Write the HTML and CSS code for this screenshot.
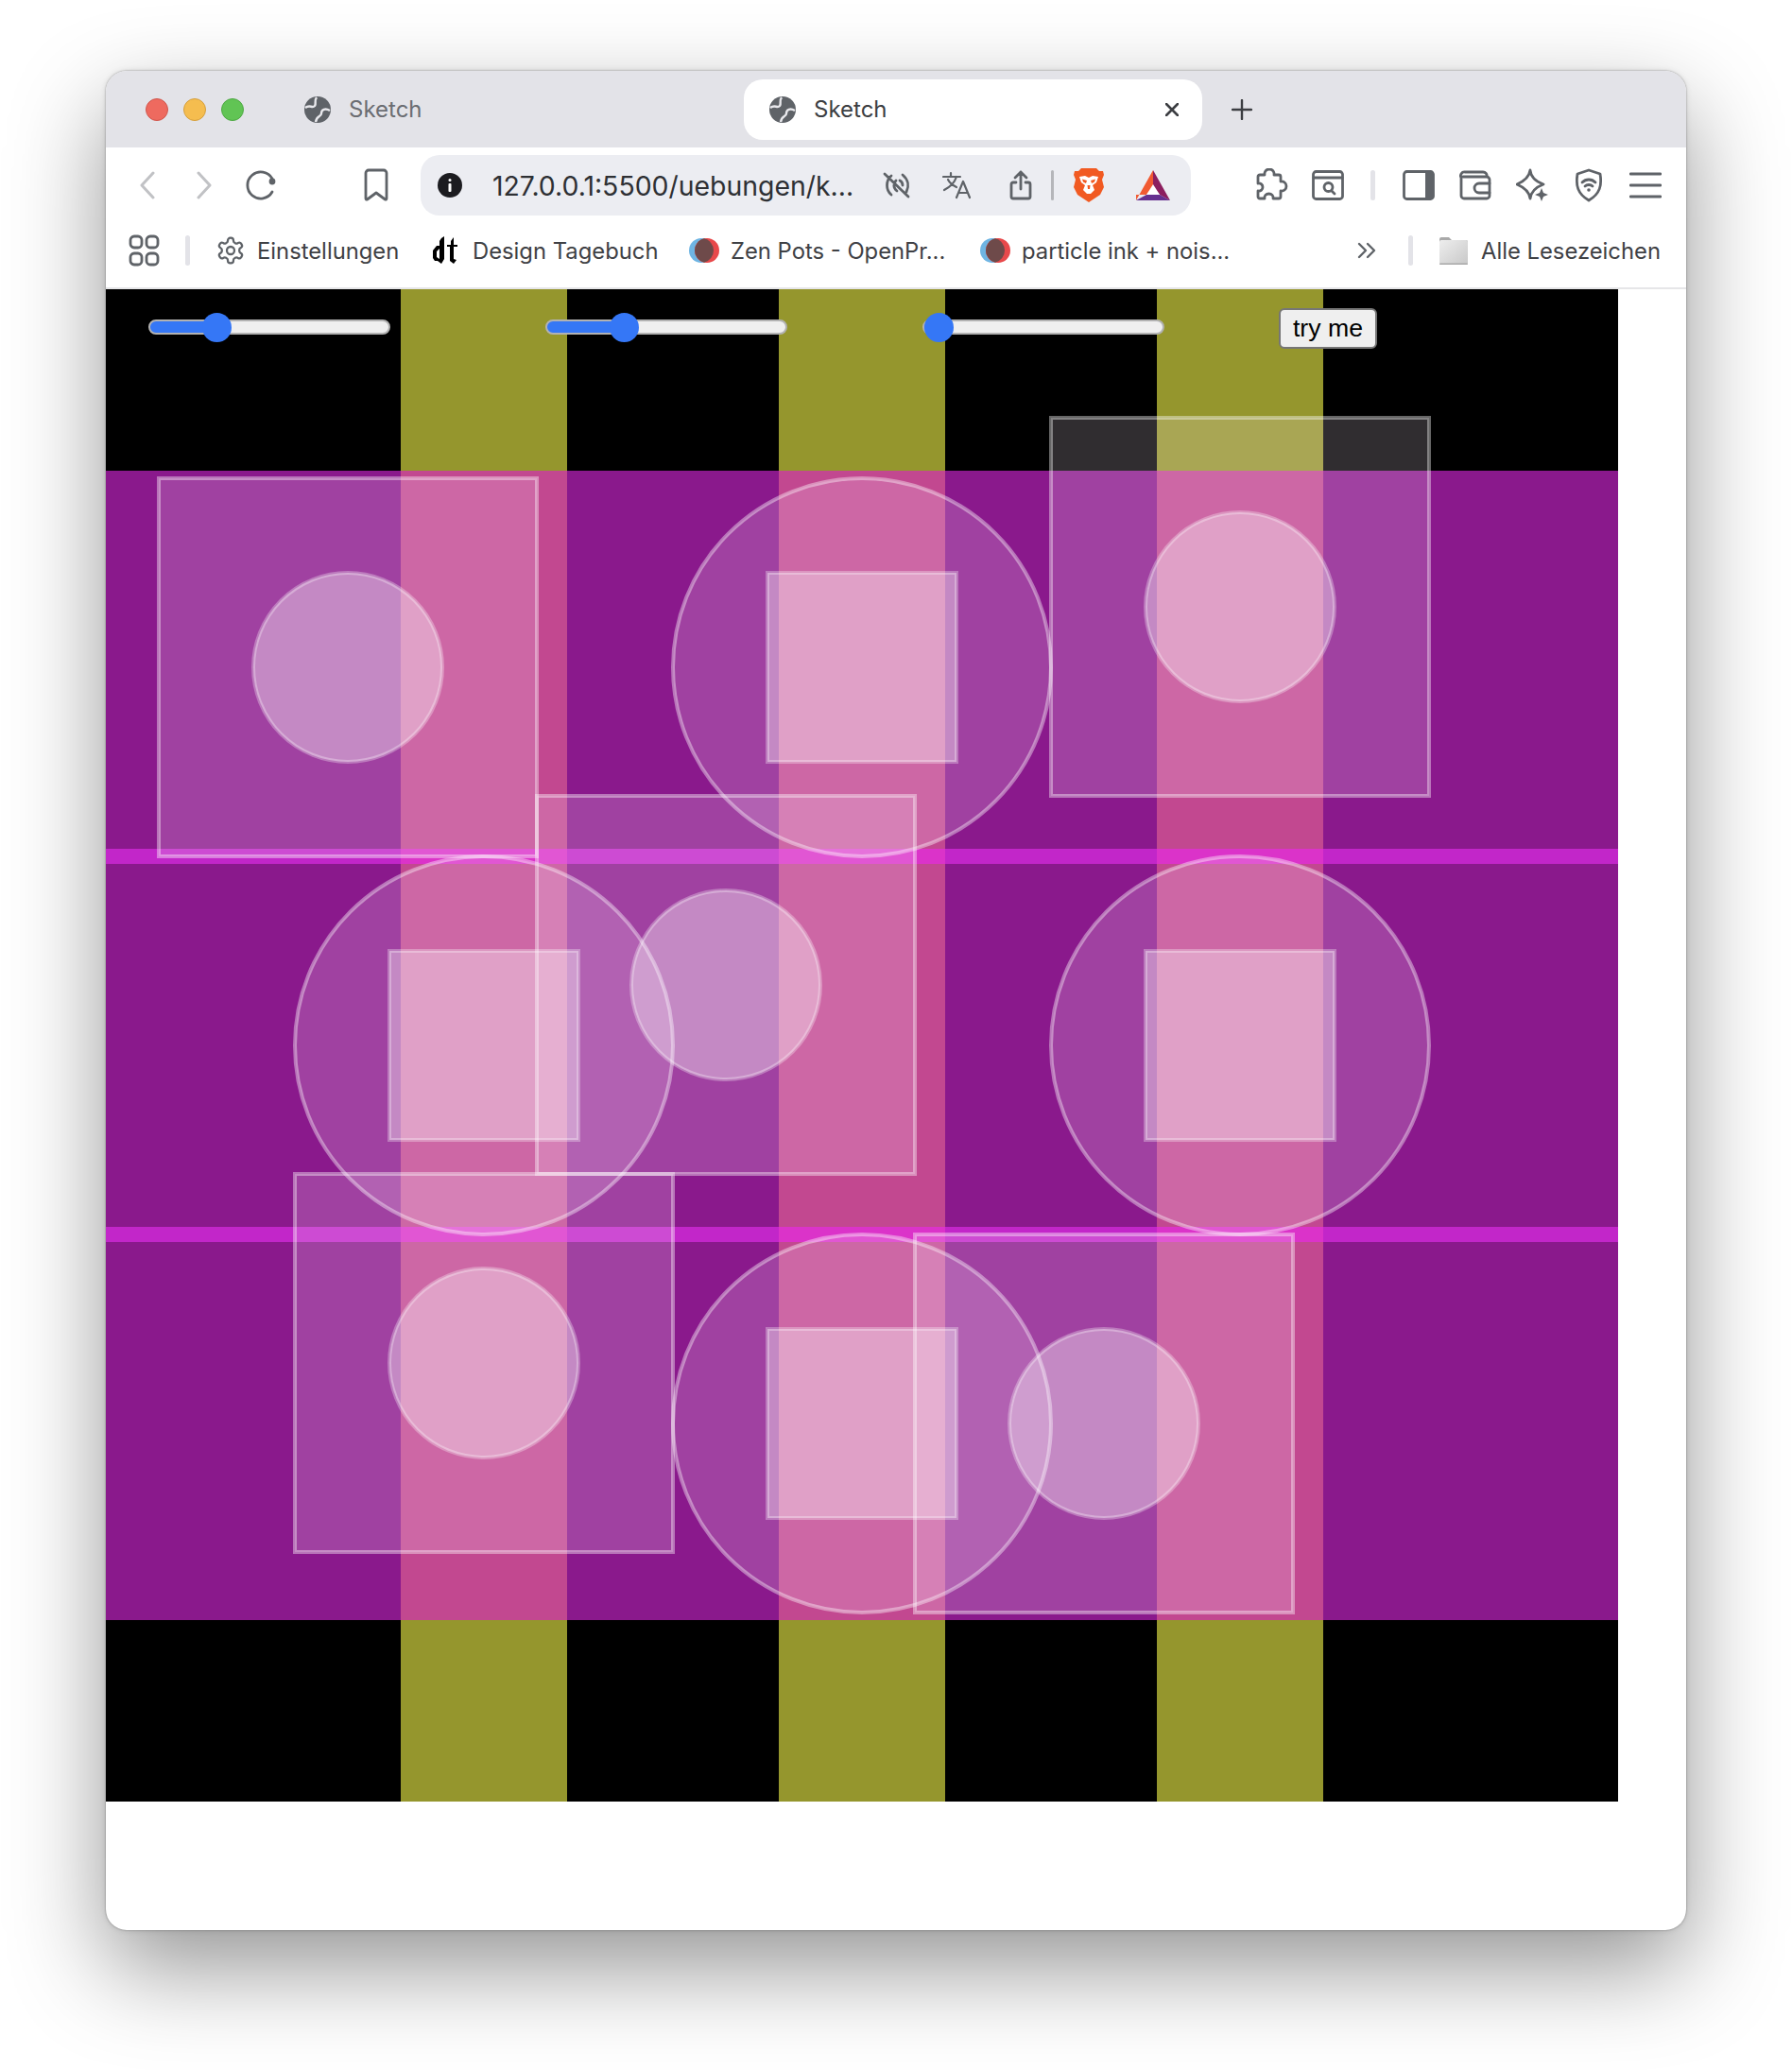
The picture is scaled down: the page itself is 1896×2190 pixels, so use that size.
FILE: index.html
```html
<!DOCTYPE html>
<html lang="de">
<head>
<meta charset="utf-8">
<title>Sketch</title>
<link rel="stylesheet" href="styles.css">
</head>
<body>
<svg class="sprites" width="0" height="0" aria-hidden="true">
  <symbol id="globe" viewBox="0 0 28 28">
    <circle cx="14" cy="14" r="14" fill="#5f6368"/>
    <path d="M1 12C6 8 8 13 11 10C13 7 10 5 13 1M27 15C22 12 18 14 18 18C18 22 13 20 12 27" fill="none" stroke="#e9e9ed" stroke-width="2.4"/>
  </symbol>
  <symbol id="fav" viewBox="0 0 32 28">
    <circle cx="13" cy="14" r="13" fill="#6fb5e3"/>
    <circle cx="19" cy="14" r="13" fill="#e8494b"/>
    <path d="M16 1.350A13 13 0 0 1 16 26.650A13 13 0 0 1 16 1.350Z" fill="#6e4a4a"/>
    <rect x="9" y="9" width="14" height="10" fill="#6e4a4a"/>
  </symbol>
</svg>

<main class="window">
  <header class="tabstrip">
    <div class="lights">
      <span class="light light-red"></span>
      <span class="light light-yellow"></span>
      <span class="light light-green"></span>
    </div>
    <div class="tab tab-idle">
      <svg class="tab-globe"><use href="#globe"/></svg>
      <span class="tab-title">Sketch</span>
    </div>
    <div class="tab tab-active">
      <svg class="tab-globe"><use href="#globe"/></svg>
      <span class="tab-title">Sketch</span>
      <svg class="tab-close" viewBox="0 0 14 14"><path d="M1 1L13 13M13 1L1 13"/></svg>
    </div>
    <svg class="tab-new" viewBox="0 0 22 22"><path d="M11 1V21M1 11H21"/></svg>
  </header>

  <nav class="navrow">
    <div class="slot slot-60"><svg class="ico ico-faint" width="16" height="30" viewBox="0 0 16 30"><path d="M14 2L2 15L14 28"/></svg></div>
    <div class="slot slot-60"><svg class="ico ico-faint" width="16" height="30" viewBox="0 0 16 30"><path d="M2 2L14 15L2 28"/></svg></div>
    <div class="slot slot-58"><svg class="ico" width="34" height="34" viewBox="0 0 34 34"><path d="M29 10A14 14 0 1 0 29 24"/><circle class="solid" cx="29" cy="13" r="3.400"/></svg></div>
    <div class="spacer-48"></div>
    <div class="slot slot-92"><svg class="ico" width="26" height="36" viewBox="0 0 26 36"><path d="M5 2H21A3 3 0 0 1 24 5V32A1 1 0 0 1 22.500 33L13 26L3.500 33A1 1 0 0 1 2 32V5A3 3 0 0 1 5 2Z"/></svg></div>
    <div class="omnibox">
      <svg class="info" viewBox="0 0 26 26"><circle cx="13" cy="13" r="13"/><rect x="11.500" y="11" width="3" height="9" rx="1"/><rect x="11.500" y="6" width="3" height="3" rx="1.500"/></svg>
      <span class="url">127.0.0.1:5500/uebungen/k...</span>
      <div class="slot slot-62"><svg class="ico" width="30" height="28" viewBox="0 0 30 28"><path d="M2 2L27 26M9 4C3 9 3 19 9 24M14 9C11 12 11 17 15 20M21 3C27 8 28 15 25 21M18 9C20 10 21 12 21 14"/></svg></div>
      <div class="slot slot-66"><svg class="ico ico-thin" width="32" height="30" viewBox="0 0 32 30"><path d="M1 6H19M9 2V6M15 6C13 12 8 17 2 20M6 9C8 13 11 15 15 17M15 28L22 11L29 28M18 23H27"/></svg></div>
      <div class="slot slot-68"><svg class="ico" width="24" height="32" viewBox="0 0 24 32"><path d="M12 2V20M6 8L12 2L18 8M7 13H4A2 2 0 0 0 2 15V28A2 2 0 0 0 4 30H20A2 2 0 0 0 22 28V15A2 2 0 0 0 20 13H17"/></svg></div>
      <span class="vsep vsep-dark"></span>
      <div class="slot slot-74">
        <svg width="32" height="36" viewBox="0 0 32 36"><path fill="#f15a22" d="M8 0H24L27 3L31 3L32 7L30 12L32 20L28 28L16 36L4 28L0 20L2 12L0 7L1 3L5 3Z"/><path fill="#fff" d="M6 9L12 8L16 10L20 8L26 9L24 15L20 18L22 23L18 27H14L10 23L12 18L8 15Z"/><path fill="#f15a22" d="M9 11.500L14 13L13 16L10 14.500ZM23 11.500L18 13L19 16L22 14.500ZM14.500 18H17.500L17 22H15Z"/></svg>
      </div>
      <div class="slot slot-62">
        <svg width="36" height="32" viewBox="0 0 36 32"><path fill="#f15a32" d="M18 0V17L11 26H0L0 32Z"/><path fill="#8c1f5f" d="M18 0L36 32L25 26L18 17Z"/><path fill="#66308f" d="M0 32L11 26H25L36 32Z"/><path fill="#fff" d="M18 15L25 26H11Z"/></svg>
      </div>
    </div>
    <div class="spacer-55"></div>
    <div class="slot slot-60"><svg class="ico" width="36" height="36" viewBox="0 0 36 36"><path d="M4 9a2 2 0 0 1 2-2h5c-.5-3 1.500-6 5-6s5.500 3 5 6h5a2 2 0 0 1 2 2v5c3-.5 6 1.500 6 5s-3 5.500-6 5v6a2 2 0 0 1-2 2h-6c.5-3-1.500-5-4.500-5s-5 2-4.500 5H6a2 2 0 0 1-2-2v-6c3 .5 5-1.500 5-4s-2-4.500-5-4z"/></svg></div>
    <div class="slot slot-58"><svg class="ico" width="34" height="32" viewBox="0 0 34 32"><rect x="1.500" y="1.500" width="31" height="29" rx="3"/><path d="M2 8H32M21 22L24 25"/><circle cx="17.500" cy="18" r="4.500"/></svg></div>
    <div class="slot slot-38"><span class="vsep"></span></div>
    <div class="slot slot-60"><svg class="ico" width="34" height="32" viewBox="0 0 34 32"><rect x="1.500" y="1.500" width="31" height="29" rx="3"/><path class="solid" d="M24 1.500H30A3 3 0 0 1 33 4.500V27.500A3 3 0 0 1 30 30.500H24Z"/></svg></div>
    <div class="slot slot-60"><svg class="ico" width="34" height="32" viewBox="0 0 34 32"><path d="M2 8V27A3 3 0 0 0 5 30H29A3 3 0 0 0 32 27V10A3 3 0 0 0 29 7H4M2 8A4 4 0 0 1 6 2H25A4 4 0 0 1 29 7"/><path d="M32 14H21A4 4 0 0 0 21 24H32"/></svg></div>
    <div class="slot slot-60"><svg class="ico" width="34" height="36" viewBox="0 0 34 36"><path d="M15 2C15.500 9 21 14 29 17C21 20 16 24 15 32C14 24 8 20 1 17C8 14 14 9 15 2Z"/><path class="solid" d="M27 21L29 26L34 28L29 30L27 35L25 30L20 28L25 26Z"/></svg></div>
    <div class="slot slot-60"><svg class="ico" width="30" height="36" viewBox="0 0 30 36"><path d="M15 2L27 6C29 18 27 27 15 34C3 27 1 18 3 6Z"/><path d="M8 15C12 11 18 11 22 15M11 19C13 17 17 17 19 19"/><circle class="solid" cx="15" cy="23" r="1.800"/></svg></div>
    <div class="slot slot-60"><svg class="ico" width="34" height="30" viewBox="0 0 34 30"><path d="M1 3H33M1 15H33M1 27H33"/></svg></div>
  </nav>

  <div class="bookmarks">
    <svg class="ico ico-grid" width="33" height="34" viewBox="0 0 33 34"><rect x="2" y="2" width="12" height="12" rx="4"/><rect x="19" y="2" width="12" height="12" rx="4"/><rect x="2" y="20" width="12" height="12" rx="4"/><rect x="19" y="20" width="12" height="12" rx="4"/></svg>
    <span class="vsep"></span>
    <div class="bm">
      <svg class="ico ico-thin" width="32" height="32" viewBox="0 0 24 24"><path stroke-width="1.700" d="M12.220 2h-.44a2 2 0 0 0-2 2v.18a2 2 0 0 1-1 1.730l-.43.25a2 2 0 0 1-2 0l-.15-.08a2 2 0 0 0-2.730.73l-.22.38a2 2 0 0 0 .73 2.730l.15.1a2 2 0 0 1 1 1.720v.51a2 2 0 0 1-1 1.740l-.15.09a2 2 0 0 0-.73 2.730l.22.38a2 2 0 0 0 2.730.73l.15-.08a2 2 0 0 1 2 0l.43.25a2 2 0 0 1 1 1.730V20a2 2 0 0 0 2 2h.44a2 2 0 0 0 2-2v-.18a2 2 0 0 1 1-1.730l.43-.25a2 2 0 0 1 2 0l.15.08a2 2 0 0 0 2.730-.73l.22-.39a2 2 0 0 0-.73-2.730l-.15-.08a2 2 0 0 1-1-1.740v-.5a2 2 0 0 1 1-1.740l.15-.09a2 2 0 0 0 .73-2.730l-.22-.38a2 2 0 0 0-2.730-.73l-.15.08a2 2 0 0 1-2 0l-.43-.25a2 2 0 0 1-1-1.730V4a2 2 0 0 0-2-2z"/><circle stroke-width="1.700" cx="12" cy="12" r="3"/></svg>
      <span class="bm-label">Einstellungen</span>
    </div>
    <div class="bm bm-wide">
      <svg width="30" height="30" viewBox="0 0 30 30"><path fill="#000" d="M11 2L14 0V24L11 29L7 26H4L2 23V15L6 10H9V5ZM9 13L6 16V22L9 24ZM21 5L24 1V9H28V11H24V24L27 25L24 29L20 26V11H17V9H21Z"/></svg>
      <span class="bm-label">Design Tagebuch</span>
    </div>
    <div class="bm">
      <svg width="32" height="28"><use href="#fav"/></svg>
      <span class="bm-label">Zen Pots - OpenPr...</span>
    </div>
    <div class="bm">
      <svg width="32" height="28"><use href="#fav"/></svg>
      <span class="bm-label">particle ink + nois...</span>
    </div>
    <svg class="ico ico-more" width="20" height="18" viewBox="0 0 20 18"><path d="M2 2L9 9L2 16M11 2L18 9L11 16"/></svg>
    <span class="vsep"></span>
    <div class="bm bm-wide">
      <svg width="30" height="30" viewBox="0 0 30 30"><defs><linearGradient id="folder" x1="0" y1="0" x2="1" y2="1"><stop offset="0" stop-color="#eeeeee"/><stop offset="1" stop-color="#c8c8c8"/></linearGradient></defs><path fill="#a9a9a9" d="M2 1H10L13 4H28A2 2 0 0 1 30 6V12H0V3A2 2 0 0 1 2 1Z"/><rect y="4" width="30" height="26" rx="2" fill="url(#folder)"/><rect y="28.500" width="30" height="1.500" rx=".7" fill="#a8a8a8"/></svg>
      <span class="bm-label">Alle Lesezeichen</span>
    </div>
  </div>

  <section class="sketch">
    <svg class="art" width="1600" height="1600" viewBox="0 0 1600 1600">
      <rect class="bg" width="1600" height="1600"/>
      <rect class="bar" x="312" width="176" height="1600"/>
      <rect class="bar" x="712" width="176" height="1600"/>
      <rect class="bar" x="1112" width="176" height="1600"/>
      <rect class="band" y="192" width="1600" height="1216"/>
      <rect class="band-bar" x="312" y="192" width="176" height="1216"/>
      <rect class="band-bar" x="712" y="192" width="176" height="1216"/>
      <rect class="band-bar" x="1112" y="192" width="176" height="1216"/>
      <rect class="stripe" y="592" width="1600" height="16"/>
      <rect class="stripe" y="992" width="1600" height="16"/>
      <rect class="stripe-bar" x="312" y="592" width="176" height="16"/>
      <rect class="stripe-bar" x="712" y="592" width="176" height="16"/>
      <rect class="stripe-bar" x="1112" y="592" width="176" height="16"/>
      <rect class="stripe-bar" x="312" y="992" width="176" height="16"/>
      <rect class="stripe-bar" x="712" y="992" width="176" height="16"/>
      <rect class="stripe-bar" x="1112" y="992" width="176" height="16"/>

      <rect class="outer" x="56" y="200" width="400" height="400"/><circle class="inner" cx="256" cy="400" r="100"/>
      <circle class="outer" cx="800" cy="400" r="200"/><rect class="inner" x="700" y="300" width="200" height="200"/>
      <rect class="outer" x="1000" y="136" width="400" height="400"/><circle class="inner" cx="1200" cy="336" r="100"/>
      <circle class="outer" cx="400" cy="800" r="200"/><rect class="inner" x="300" y="700" width="200" height="200"/>
      <rect class="outer" x="456" y="536" width="400" height="400"/><circle class="inner" cx="656" cy="736" r="100"/>
      <circle class="outer" cx="1200" cy="800" r="200"/><rect class="inner" x="1100" y="700" width="200" height="200"/>
      <rect class="outer" x="200" y="936" width="400" height="400"/><circle class="inner" cx="400" cy="1136" r="100"/>
      <circle class="outer" cx="800" cy="1200" r="200"/><rect class="inner" x="700" y="1100" width="200" height="200"/>
      <rect class="outer" x="856" y="1000" width="400" height="400"/><circle class="inner" cx="1056" cy="1200" r="100"/>
    </svg>
    <div class="controls">
      <input class="range" type="range" min="0" max="100" value="25" style="--pct:72px" aria-label="a">
      <input class="range range-b" type="range" min="0" max="100" value="30" style="--pct:83px" aria-label="b">
      <input class="range range-c" type="range" min="0" max="100" value="0" style="--pct:15px" aria-label="c">
      <button class="try" type="button">try me</button>
    </div>
  </section>
</main>
</body>
</html>
```

FILE: styles.css
```css
* { box-sizing: border-box; }

html, body {
  margin: 0;
  height: 2190px;
  overflow: hidden;
  background: #fff;
}

body {
  padding: 75px 0 0 112px;
  font-family: Inter, "Liberation Sans", sans-serif;
}

.sprites { position: absolute; }

.window {
  width: 1672px;
  height: 1967px;
  border-radius: 22px;
  background: #fff;
  overflow: hidden;
  box-shadow: 0 0 2px rgba(0, 0, 0, .4), 0 0 6px rgba(0, 0, 0, .12), 0 40px 100px rgba(0, 0, 0, .42);
}

/* tab strip */
.tabstrip {
  height: 81px;
  padding: 9px 0 8px 42px;
  display: flex;
  align-items: center;
  background: #e3e3e8;
}

.lights { display: flex; gap: 16px; width: 104px; }

.light { width: 24px; height: 24px; border-radius: 50%; border: 1px solid; }
.light-red { background: #ee6a5f; border-color: #d0564c; }
.light-yellow { background: #f5bd4f; border-color: #d59f3c; }
.light-green { background: #61c454; border-color: #4ea843; }

.tab {
  width: 485px;
  height: 64px;
  padding: 0 24px 0 27px;
  display: flex;
  align-items: center;
  border-radius: 20px;
  font-size: 24px;
}

.tab-idle { margin-left: 37px; color: #6b6d72; }
.tab-active { margin-left: 7px; background: #fff; color: #3c3e42; }

.tab-globe { width: 28px; height: 28px; flex: none; }
.tab-title { margin-left: 19px; margin-top: -1px; }

.tab-close {
  width: 14px;
  height: 14px;
  margin-left: auto;
  margin-right: 1px;
  fill: none;
  stroke: #3c3e42;
  stroke-width: 2.600;
  stroke-linecap: round;
}

.tab-new {
  width: 22px;
  height: 22px;
  margin-left: 31px;
  fill: none;
  stroke: #3c3e42;
  stroke-width: 2.400;
  stroke-linecap: round;
}

/* nav row */
.navrow {
  height: 80px;
  padding-left: 14px;
  display: flex;
  align-items: center;
  background: #fff;
}

.slot { display: flex; align-items: center; justify-content: center; flex: none; }
.slot-38 { width: 38px; }
.slot-58 { width: 58px; padding-left: 2px; }
.slot-60 { width: 60px; }
.slot-62 { width: 62px; }
.slot-66 { width: 66px; }
.slot-68 { width: 68px; }
.slot-74 { width: 74px; }
.slot-92 { width: 92px; }
.spacer-48 { width: 48px; flex: none; }
.spacer-55 { width: 55px; flex: none; }

.ico {
  flex: none;
  fill: none;
  stroke: #5f6368;
  stroke-width: 2.800;
  stroke-linecap: round;
  stroke-linejoin: round;
}
.ico-faint { stroke: #c1c2c5; stroke-width: 3; }
.ico-thin { stroke-width: 2.200; }
.ico .solid { fill: #5f6368; stroke: none; }

.omnibox {
  width: 815px;
  height: 64px;
  margin-left: 1px;
  padding-left: 18px;
  display: flex;
  align-items: center;
  flex: none;
  border-radius: 20px;
  background: #ecedf2;
}

.info { width: 26px; height: 26px; flex: none; fill: #1c1c20; }
.info rect { fill: #fff; }

.url {
  width: 397px;
  margin-left: 32px;
  flex: none;
  font-size: 28.400px;
  color: #2e3034;
  white-space: nowrap;
}

.vsep {
  width: 5px;
  height: 32px;
  flex: none;
  border-radius: 3px;
  background: #e3e3e8;
}
.vsep-dark { width: 3px; margin-left: -2px; background: #b5b6ba; }

/* bookmarks */
.bookmarks {
  height: 70px;
  padding: 0 0 10px 24px;
  display: grid;
  grid-template-columns: 62px 30px 228px 273px 308px 399px 56px 31px 1fr;
  align-items: center;
  background: #fff;
  border-bottom: 2px solid #e6e6e8;
}

.bookmarks .vsep { justify-self: start; margin-left: -2px; }
.ico-more { justify-self: start; stroke-width: 2.400; }

.bm { display: flex; align-items: center; gap: 12px; min-width: 0; }
.bm-wide { gap: 14px; }
.bm-label { font-size: 23.800px; color: #3f4145; white-space: nowrap; }

/* sketch */
.sketch { position: relative; height: 1661px; background: #fff; }
.art { display: block; }

.bg { fill: #000; }
.bar { fill: #95962d; }
.band { fill: #8a198c; }
.band-bar { fill: #c24890; }
.stripe { fill: #c226c9; }
.stripe-bar { fill: #db33c9; }

.outer {
  fill: rgba(255, 240, 255, .19);
  stroke: rgba(255, 255, 255, .4);
  stroke-width: 4;
}

.inner {
  fill: rgba(255, 255, 255, .38);
  stroke: rgba(255, 255, 255, .3);
  stroke-width: 4;
}

.controls {
  position: absolute;
  top: 20px;
  left: 45px;
  display: flex;
  align-items: center;
}

.range {
  width: 256px;
  height: 31px;
  margin: -3px 0 0;
  -webkit-appearance: none;
  appearance: none;
  background: transparent;
  flex: none;
}
.range-b { margin-left: 164px; }
.range-c { margin-left: 143px; }

.range::-webkit-slider-runnable-track {
  height: 16px;
  border: 2px solid #b2b2b2;
  border-radius: 8px;
  background: linear-gradient(90deg, #3577f6 var(--pct), #efefef var(--pct));
}

.range::-webkit-slider-thumb {
  -webkit-appearance: none;
  width: 31px;
  height: 31px;
  margin-top: -9.500px;
  border-radius: 50%;
  background: #3577f6;
}

.try {
  width: 104px;
  height: 43px;
  margin: 0 0 0 121px;
  padding: 0;
  border: 2px solid #767676;
  border-radius: 6px;
  background: #efefef;
  font-family: "Liberation Sans", Arial, sans-serif;
  font-size: 26.670px;
  color: #000;
}
```
